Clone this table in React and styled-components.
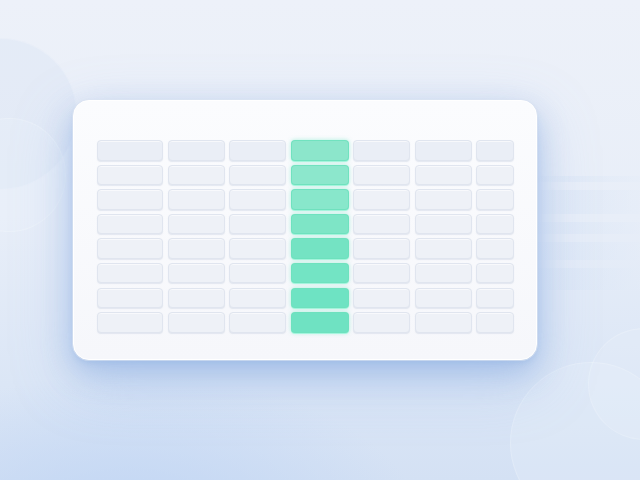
import React from "react";
import styled, { createGlobalStyle } from "styled-components";

const Global = createGlobalStyle`
  html, body { margin: 0; padding: 0; width: 640px; height: 480px; overflow: hidden; }
  body { font-family: "Inter", "Liberation Sans", sans-serif; }
`;

const Page = styled.div`
  position: relative;
  width: 640px;
  height: 480px;
  overflow: hidden;
  box-sizing: border-box;
  padding: 100px 0 0 73px;
  background:
    radial-gradient(ellipse 420px 220px at 20% 110%, rgba(190, 212, 244, 0.9), rgba(190, 212, 244, 0) 70%),
    linear-gradient(180deg, #edf1f9 0%, #e8eef8 45%, #dbe6f6 80%, #d4e1f4 100%);
`;

const Blob = styled.div`
  position: absolute;
  border-radius: 50%;
  left: ${(p) => p.$x}px;
  top: ${(p) => p.$y}px;
  width: ${(p) => p.$d}px;
  height: ${(p) => p.$d}px;
  background: ${(p) => p.$bg};
  border: 1px solid rgba(255, 255, 255, 0.18);
  pointer-events: none;
`;

const Stripes = styled.div`
  position: absolute;
  left: 530px;
  top: 176px;
  width: 110px;
  display: flex;
  flex-direction: column;
  gap: 8px;
  pointer-events: none;
`;

const Stripe = styled.div`
  height: ${(p) => p.$h}px;
  background: linear-gradient(90deg, rgba(200, 218, 242, 0), rgba(214, 227, 245, 0.4) 35%, rgba(228, 236, 248, 0.35));
`;

const Card = styled.div`
  position: relative;
  z-index: 1;
  width: 464px;
  height: 260px;
  box-sizing: border-box;
  padding: 39px 22px 0 23px;
  border-radius: 16px;
  background: linear-gradient(180deg, #fbfcfe 0%, #f6f7fb 100%);
  border: 1px solid #ffffff;
  box-shadow:
    0 0 0 1px rgba(220, 228, 242, 0.6),
    0 3px 4px rgba(150, 180, 225, 0.35),
    0 12px 30px rgba(120, 160, 220, 0.45),
    0 20px 60px rgba(140, 175, 230, 0.35);
`;

const Grid = styled.div`
  display: grid;
  grid-template-columns: 66px 57px 57px 58px 57px 57px 38px;
  grid-auto-rows: 20.5px;
  column-gap: 4.5px;
  row-gap: 4.1px;
`;

const Cell = styled.div`
  box-sizing: border-box;
  border-radius: 4px;
  background: ${(p) => (p.$head ? "#eaeef6" : "#eef1f7")};
  border: 1px solid #e0e5ef;
  box-shadow: 0 1px 1px rgba(200, 208, 225, 0.45), inset 0 1px 0 rgba(255, 255, 255, 0.6);
`;

const greens = ["#8ce6cb", "#8ce7cc", "#88e7cb", "#7ee5c6", "#74e3c3", "#73e4c4", "#6ee3c3", "#6fe2c2"];

const GreenCell = styled.div`
  box-sizing: border-box;
  border-radius: 4px;
  background: ${(p) => greens[p.$row]};
  border: 1px solid rgba(110, 225, 190, 0.9);
  box-shadow:
    0 1px 0 rgba(160, 245, 220, 0.9),
    0 0 4px rgba(110, 230, 195, 0.55);
`;

const COLS = 7;
const ROWS = 8;

export default function App() {
  const cells = [];
  for (let r = 0; r < ROWS; r++) {
    for (let c = 0; c < COLS; c++) {
      if (c === 3) cells.push(<GreenCell key={`${r}-${c}`} $row={r} />);
      else cells.push(<Cell key={`${r}-${c}`} $head={r === 0} />);
    }
  }
  return (
    <>
      <Global />
      <Page>
        <Blob $x={-75} $y={38} $d={150} $bg="rgba(214, 226, 244, 0.35)" />
        <Blob $x={-48} $y={118} $d={112} $bg="rgba(236, 242, 250, 0.25)" />
        <Blob $x={588} $y={328} $d={110} $bg="rgba(232, 239, 249, 0.3)" />
        <Blob $x={510} $y={362} $d={160} $bg="rgba(236, 242, 250, 0.25)" />
        <Stripes>
          <Stripe $h={6} />
          <Stripe $h={24} />
          <Stripe $h={12} />
          <Stripe $h={18} />
          <Stripe $h={22} />
        </Stripes>
        <Card>
          <Grid>{cells}</Grid>
        </Card>
      </Page>
    </>
  );
}
